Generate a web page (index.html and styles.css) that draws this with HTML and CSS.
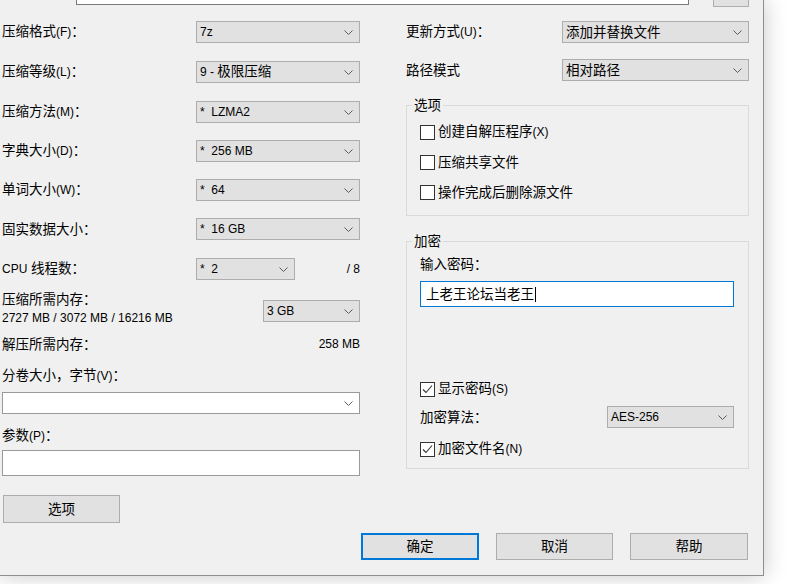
FILE: index.html
```html
<!DOCTYPE html>
<html lang="zh-CN">
<head>
<meta charset="utf-8">
<title>添加到压缩包</title>
<link rel="stylesheet" href="styles.css">
</head>
<body>
<div class="win">
  <div class="topbar">
    <div class="top-input"></div>
    <div class="top-btn"></div>
  </div>
  <div class="cols">
    <div class="col-left">
      <div class="row"><span class="lbl">压缩格式<span class="en">(F)</span>：</span><div class="combo cw"><span class="en">7z</span><svg class="chev" width="9" height="5" viewBox="0 0 9 5"><polyline points="0.5,0.5 4.5,4.5 8.5,0.5" fill="none" stroke="#5a5a5a" stroke-width="1"/></svg></div></div>
      <div class="row m18"><span class="lbl">压缩等级<span class="en">(L)</span>：</span><div class="combo cw"><span><span class="en">9 - </span>极限压缩</span><svg class="chev" width="9" height="5" viewBox="0 0 9 5"><polyline points="0.5,0.5 4.5,4.5 8.5,0.5" fill="none" stroke="#5a5a5a" stroke-width="1"/></svg></div></div>
      <div class="row m18"><span class="lbl">压缩方法<span class="en">(M)</span>：</span><div class="combo cw"><span class="en">*&nbsp; LZMA2</span><svg class="chev" width="9" height="5" viewBox="0 0 9 5"><polyline points="0.5,0.5 4.5,4.5 8.5,0.5" fill="none" stroke="#5a5a5a" stroke-width="1"/></svg></div></div>
      <div class="row"><span class="lbl">字典大小<span class="en">(D)</span>：</span><div class="combo cw"><span class="en">*&nbsp; 256 MB</span><svg class="chev" width="9" height="5" viewBox="0 0 9 5"><polyline points="0.5,0.5 4.5,4.5 8.5,0.5" fill="none" stroke="#5a5a5a" stroke-width="1"/></svg></div></div>
      <div class="row"><span class="lbl">单词大小<span class="en">(W)</span>：</span><div class="combo cw"><span class="en">*&nbsp; 64</span><svg class="chev" width="9" height="5" viewBox="0 0 9 5"><polyline points="0.5,0.5 4.5,4.5 8.5,0.5" fill="none" stroke="#5a5a5a" stroke-width="1"/></svg></div></div>
      <div class="row"><span class="lbl">固实数据大小：</span><div class="combo cw"><span class="en">*&nbsp; 16 GB</span><svg class="chev" width="9" height="5" viewBox="0 0 9 5"><polyline points="0.5,0.5 4.5,4.5 8.5,0.5" fill="none" stroke="#5a5a5a" stroke-width="1"/></svg></div></div>
      <div class="row m18"><span class="lbl"><span class="en">CPU</span> 线程数：</span><div class="combo cpu"><span class="en">*&nbsp; 2</span><svg class="chev" width="9" height="5" viewBox="0 0 9 5"><polyline points="0.5,0.5 4.5,4.5 8.5,0.5" fill="none" stroke="#5a5a5a" stroke-width="1"/></svg></div><span class="en fill-right">/ 8</span></div>
      <div class="mem">
        <div class="mem-txt">
          <div>压缩所需内存：</div>
          <div class="en">2727 MB / 3072 MB / 16216 MB</div>
        </div>
        <div class="combo mem-combo"><span class="en">3 GB</span><svg class="chev" width="9" height="5" viewBox="0 0 9 5"><polyline points="0.5,0.5 4.5,4.5 8.5,0.5" fill="none" stroke="#5a5a5a" stroke-width="1"/></svg></div>
      </div>
      <div class="line unmem"><span>解压所需内存：</span><span class="en">258 MB</span></div>
      <div class="line vol-lbl">分卷大小，字节<span class="en">(V)</span>：</div>
      <div class="edit-combo"><svg class="chev" width="9" height="5" viewBox="0 0 9 5"><polyline points="0.5,0.5 4.5,4.5 8.5,0.5" fill="none" stroke="#5a5a5a" stroke-width="1"/></svg></div>
      <div class="line par-lbl">参数<span class="en">(P)</span>：</div>
      <div class="edit"></div>
      <div class="btn opt-btn">选项</div>
    </div>

    <div class="col-right">
      <div class="row"><span>更新方式<span class="en">(U)</span>：</span><div class="combo rw"><span>添加并替换文件</span><svg class="chev" width="9" height="5" viewBox="0 0 9 5"><polyline points="0.5,0.5 4.5,4.5 8.5,0.5" fill="none" stroke="#5a5a5a" stroke-width="1"/></svg></div></div>
      <div class="row m16"><span>路径模式</span><div class="combo rw"><span>相对路径</span><svg class="chev" width="9" height="5" viewBox="0 0 9 5"><polyline points="0.5,0.5 4.5,4.5 8.5,0.5" fill="none" stroke="#5a5a5a" stroke-width="1"/></svg></div></div>

      <fieldset class="group g-opts">
        <legend>选项</legend>
        <div class="chk first"><span class="cb"></span><span>创建自解压程序<span class="en">(X)</span></span></div>
        <div class="chk"><span class="cb"></span><span>压缩共享文件</span></div>
        <div class="chk"><span class="cb"></span><span>操作完成后删除源文件</span></div>
      </fieldset>

      <fieldset class="group g-enc">
        <legend>加密</legend>
        <div class="enc">
          <div class="line pw-lbl">输入密码：</div>
          <div class="pwd"><span>上老王论坛当老王</span><span class="caret"></span></div>
          <div class="chk show"><span class="cb"><svg width="13" height="13" viewBox="0 0 13 13"><polyline points="2,6.5 5,9.5 11,2.5" fill="none" stroke="#333" stroke-width="1.1"/></svg></span><span>显示密码<span class="en">(S)</span></span></div>
          <div class="row algo"><span>加密算法：</span><div class="combo aw"><span class="en">AES-256</span><svg class="chev" width="9" height="5" viewBox="0 0 9 5"><polyline points="0.5,0.5 4.5,4.5 8.5,0.5" fill="none" stroke="#5a5a5a" stroke-width="1"/></svg></div></div>
          <div class="chk encname"><span class="cb"><svg width="13" height="13" viewBox="0 0 13 13"><polyline points="2,6.5 5,9.5 11,2.5" fill="none" stroke="#333" stroke-width="1.1"/></svg></span><span>加密文件名<span class="en">(N)</span></span></div>
        </div>
      </fieldset>
    </div>
  </div>

  <div class="footer">
    <div class="btn ok">确定</div>
    <div class="btn">取消</div>
    <div class="btn help">帮助</div>
  </div>
</div>
</body>
</html>
```

FILE: styles.css
```css
html, body {
  margin: 0;
  padding: 0;
}

body {
  width: 800px;
  height: 584px;
  overflow: hidden;
  background: #ffffff;
  font-family: "Liberation Sans", "Noto Sans CJK SC", sans-serif;
  font-size: 13.5px;
  line-height: 19px;
  color: #000;
}

.en {
  font-family: "Liberation Sans", sans-serif;
  font-size: 12px;
}

.win {
  width: 763px;
  height: 575px;
  background: #f0f0f0;
  border-right: 1px solid #8e8e8e;
  border-bottom: 1px solid #8e8e8e;
  box-shadow: 0 0 22px rgba(0, 0, 0, 0.22);
  position: relative;
}

/* top strip: bottom edge of the archive path field and browse button */
.topbar {
  display: flex;
  align-items: flex-start;
  height: 8px;
}

.top-input {
  margin-left: 76px;
  width: 611px;
  height: 4px;
  background: #fff;
  border: 1px solid #7a7a7a;
  border-top: none;
}

.top-btn {
  margin-left: 24px;
  width: 34px;
  height: 6px;
  background: #e1e1e1;
  border: 1px solid #adadad;
  border-top: none;
}

.cols {
  display: grid;
  grid-template-columns: 358px 343px;
  column-gap: 46px;
  padding-left: 2px;
  align-items: start;
}

.col-left, .col-right {
  padding-top: 13px;
}

.row {
  display: flex;
  align-items: center;
  height: 22px;
}

.col-left .row + .row { margin-top: 17px; }
.col-left .row.m18 { margin-top: 18px; }
.col-right .row.m16 { margin-top: 16px; }

.lbl {
  flex: none;
  width: 194px;
  white-space: nowrap;
}

.combo {
  box-sizing: border-box;
  height: 22px;
  background: #e1e1e1;
  border: 1px solid #adadad;
  display: flex;
  align-items: center;
  justify-content: space-between;
  padding: 0 6px 0 3px;
  white-space: nowrap;
}

.chev { flex: none; display: block; }

.cw { width: 164px; }
.cpu { width: 99px; }
.fill-right { flex: 1; text-align: right; }

.mem {
  display: flex;
  align-items: flex-start;
  margin-top: 10px;
}

.mem-txt {
  width: 261px;
}

.mem-combo {
  width: 97px;
  margin-top: 10px;
}

.line {
  height: 19px;
  white-space: nowrap;
}

.unmem {
  display: flex;
  justify-content: space-between;
  margin-top: 7px;
}

.vol-lbl { margin-top: 12px; }

.edit-combo {
  box-sizing: border-box;
  margin-top: 7px;
  height: 22px;
  background: #fff;
  border: 1px solid #9a9a9a;
  display: flex;
  align-items: center;
  justify-content: flex-end;
  padding-right: 6px;
}

.par-lbl { margin-top: 12px; }

.edit {
  box-sizing: border-box;
  margin-top: 5px;
  height: 26px;
  background: #fff;
  border: 1px solid #9a9a9a;
}

.btn {
  box-sizing: border-box;
  height: 27px;
  width: 117px;
  background: #e1e1e1;
  border: 1px solid #adadad;
  display: flex;
  align-items: center;
  justify-content: center;
}

.opt-btn {
  margin-top: 19px;
  margin-left: 1px;
  height: 28px;
}

/* right column */
.col-right .row {
  justify-content: space-between;
}

.rw { width: 187px; }

.group {
  margin: 0;
  padding: 0 0 13px 0;
  border: 1px solid #dadada;
  min-width: 0;
}

.group legend {
  padding: 0 2px;
  margin-left: 5px;
  line-height: 19px;
}

.g-opts { margin-top: 15px; }
.g-enc { margin-top: 16px; padding-bottom: 9px; }

.chk {
  display: flex;
  align-items: center;
  gap: 3px;
  height: 20px;
  margin-left: 13px;
  margin-top: 10px;
  white-space: nowrap;
}

.chk.first { margin-top: 7px; }

.cb {
  flex: none;
  width: 13px;
  height: 13px;
  border: 1px solid #333;
  background: #fff;
  display: block;
}

.cb svg { display: block; }

.enc {
  width: 314px;
  margin-left: 13px;
}

.enc .chk { margin-left: 0; }

.pw-lbl { margin-top: 4px; }

.pwd {
  box-sizing: border-box;
  margin-top: 7px;
  height: 26px;
  background: #fff;
  border: 1px solid #0078d7;
  display: flex;
  align-items: center;
  padding-left: 5px;
}

.caret {
  width: 1px;
  height: 15px;
  background: #000;
  margin-left: 1px;
}

.chk.show { margin-top: 72px; }
.row.algo { margin-top: 7px; }
.aw { width: 127px; }
.chk.encname { margin-top: 11px; }

.footer {
  display: flex;
  gap: 17px;
  padding-left: 361px;
  margin-top: 10px;
}

.footer .btn.ok,
.footer .btn.help {
  width: 118px;
}

.footer .btn.ok {
  border: 2px solid #0078d7;
}
```
